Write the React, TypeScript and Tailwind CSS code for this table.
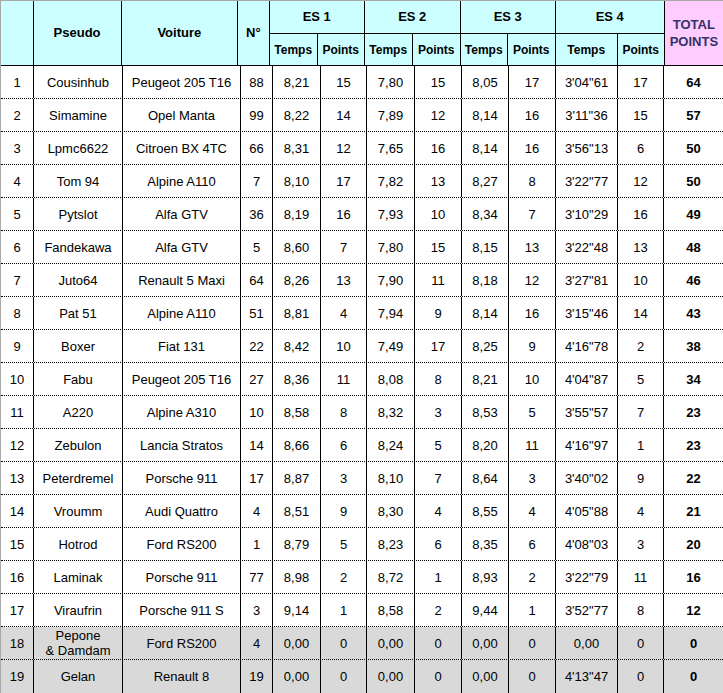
const rows: (string | number)[][] = [
  [1, "Cousinhub", "Peugeot 205 T16", 88, "8,21", 15, "7,80", 15, "8,05", 17, `3'04"61`, 17, 64],
  [2, "Simamine", "Opel Manta", 99, "8,22", 14, "7,89", 12, "8,14", 16, `3'11"36`, 15, 57],
  [3, "Lpmc6622", "Citroen BX 4TC", 66, "8,31", 12, "7,65", 16, "8,14", 16, `3'56"13`, 6, 50],
  [4, "Tom 94", "Alpine A110", 7, "8,10", 17, "7,82", 13, "8,27", 8, `3'22"77`, 12, 50],
  [5, "Pytslot", "Alfa GTV", 36, "8,19", 16, "7,93", 10, "8,34", 7, `3'10"29`, 16, 49],
  [6, "Fandekawa", "Alfa GTV", 5, "8,60", 7, "7,80", 15, "8,15", 13, `3'22"48`, 13, 48],
  [7, "Juto64", "Renault 5 Maxi", 64, "8,26", 13, "7,90", 11, "8,18", 12, `3'27"81`, 10, 46],
  [8, "Pat 51", "Alpine A110", 51, "8,81", 4, "7,94", 9, "8,14", 16, `3'15"46`, 14, 43],
  [9, "Boxer", "Fiat 131", 22, "8,42", 10, "7,49", 17, "8,25", 9, `4'16"78`, 2, 38],
  [10, "Fabu", "Peugeot 205 T16", 27, "8,36", 11, "8,08", 8, "8,21", 10, `4'04"87`, 5, 34],
  [11, "A220", "Alpine A310", 10, "8,58", 8, "8,32", 3, "8,53", 5, `3'55"57`, 7, 23],
  [12, "Zebulon", "Lancia Stratos", 14, "8,66", 6, "8,24", 5, "8,20", 11, `4'16"97`, 1, 23],
  [13, "Peterdremel", "Porsche 911", 17, "8,87", 3, "8,10", 7, "8,64", 3, `3'40"02`, 9, 22],
  [14, "Vroumm", "Audi Quattro", 4, "8,51", 9, "8,30", 4, "8,55", 4, `4'05"88`, 4, 21],
  [15, "Hotrod", "Ford RS200", 1, "8,79", 5, "8,23", 6, "8,35", 6, `4'08"03`, 3, 20],
  [16, "Laminak", "Porsche 911", 77, "8,98", 2, "8,72", 1, "8,93", 2, `3'22"79`, 11, 16],
  [17, "Viraufrin", "Porsche 911 S", 3, "9,14", 1, "8,58", 2, "9,44", 1, `3'52"77`, 8, 12],
  [18, "Pepone\n& Damdam", "Ford RS200", 4, "0,00", 0, "0,00", 0, "0,00", 0, "0,00", 0, 0],
  [19, "Gelan", "Renault 8", 19, "0,00", 0, "0,00", 0, "0,00", 0, `4'13"47`, 0, 0],
];

const widths = [
  "w-[33px]", "w-[89px]", "w-[118px]", "w-[32px]",
  "w-[48px]", "w-[46px]", "w-[48px]", "w-[47px]",
  "w-[47px]", "w-[47px]", "w-[62px]", "w-[46px]", "w-[59px]",
];

function Stage({ label, tw, pw }: { label: string; tw: string; pw: string }) {
  return (
    <div className="flex flex-col border-r border-black">
      <div className="flex h-[33px] items-center justify-center border-b border-black text-[13px]">
        {label}
      </div>
      <div className="flex flex-1 text-[12px]">
        <div className={`${tw} flex items-center justify-center border-r border-black`}>Temps</div>
        <div className={`${pw} flex items-center justify-center`}>Points</div>
      </div>
    </div>
  );
}

export default function App() {
  return (
    <div className="w-[723px] border-l border-t border-[#a8a8a8] bg-white font-['Liberation_Sans',Arial,sans-serif] text-[13px] text-black">
      <div className="flex h-[65px] border-b border-black bg-[#ccffff] font-bold">
        <div className="w-[33px] border-r border-black" />
        <div className="flex w-[89px] items-center justify-center border-r border-black">Pseudo</div>
        <div className="flex w-[118px] items-center justify-center border-r border-black">Voiture</div>
        <div className="flex w-[32px] items-center justify-center border-r border-black">N°</div>
        <Stage label="ES 1" tw="w-[48px]" pw="w-[46px]" />
        <Stage label="ES 2" tw="w-[48px]" pw="w-[47px]" />
        <Stage label="ES 3" tw="w-[47px]" pw="w-[47px]" />
        <Stage label="ES 4" tw="w-[62px]" pw="w-[46px]" />
        <div className="flex w-[59px] flex-col items-center justify-center bg-[#ffccff] text-center leading-[17px] text-[#333366]">
          <span>TOTAL</span>
          <span>POINTS</span>
        </div>
      </div>

      {rows.map((r, i) => (
        <div
          key={i}
          className={`flex h-[33px] ${i < rows.length - 1 ? "border-b border-dotted border-black" : ""} ${i >= 17 ? "bg-[#d9d9d9]" : ""}`}
        >
          {r.map((v, j) => (
            <div
              key={j}
              className={`${widths[j]} flex items-center justify-center whitespace-pre-line text-center leading-[15px] ${j < 12 ? "border-r border-black" : "font-bold"}`}
            >
              {v}
            </div>
          ))}
        </div>
      ))}
    </div>
  );
}
